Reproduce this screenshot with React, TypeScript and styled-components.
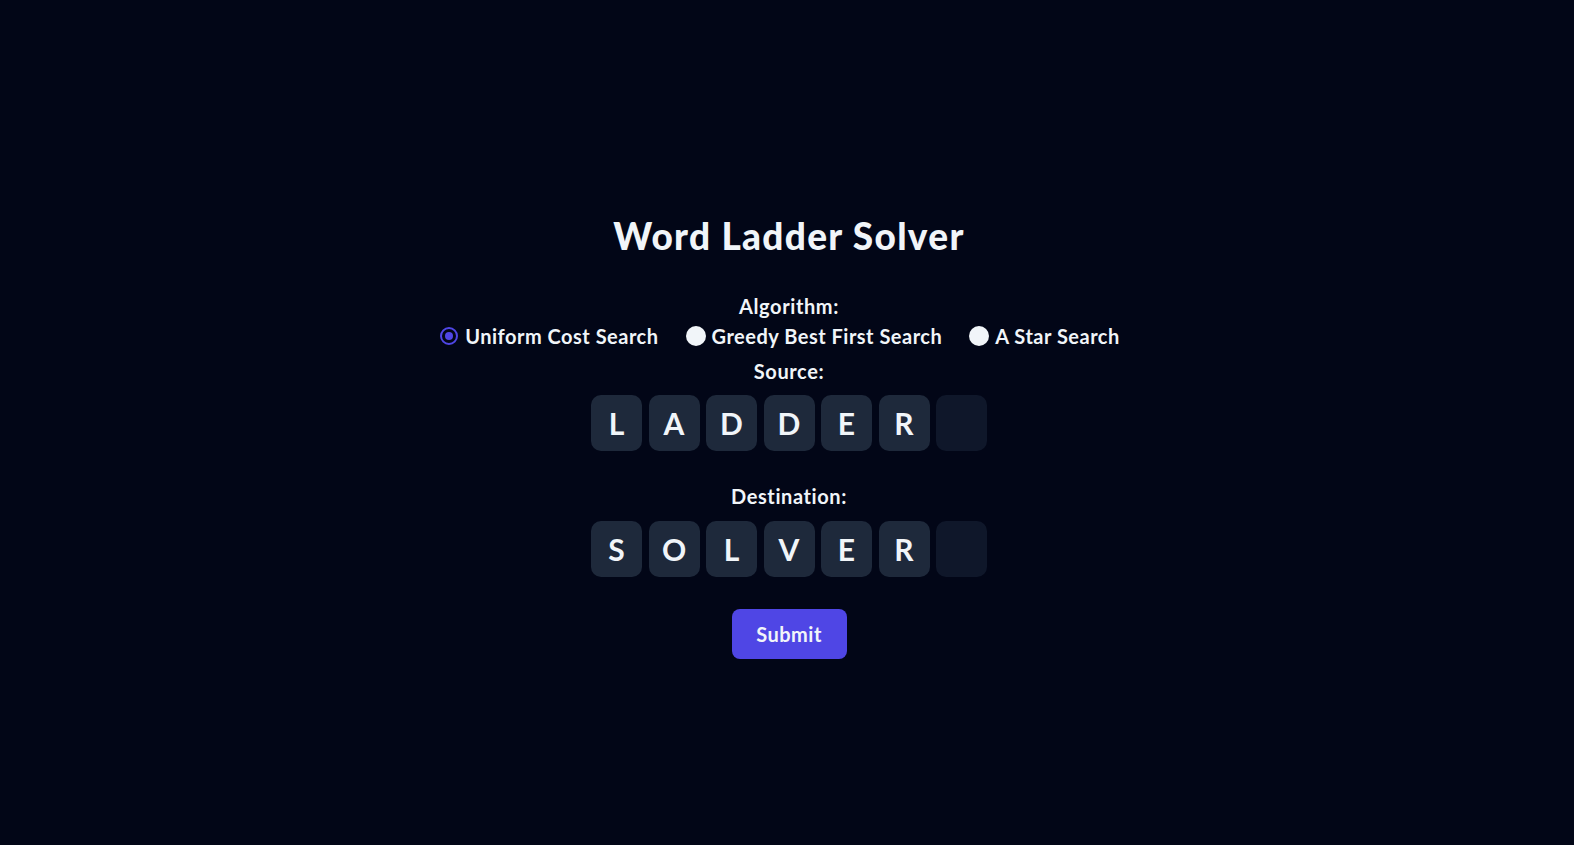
import React, { useState } from "react";
import styled, { createGlobalStyle } from "styled-components";

const GlobalStyle = createGlobalStyle`
  html, body {
    margin: 0;
    padding: 0;
    background: #020617;
  }
  body {
    font-family: "Lato", "Inter", sans-serif;
    color: #f1f5f9;
  }
`;

const Page = styled.main`
  min-height: 100vh;
  box-sizing: border-box;
  padding-top: 214px;
  padding-left: 4px;
  display: flex;
  flex-direction: column;
  align-items: center;
`;

const Title = styled.h1`
  margin: 0 0 36px;
  font-size: 37px;
  line-height: 44px;
  font-weight: 900;
  letter-spacing: 1.3px;
  color: #f1f5f9;
`;

const Label = styled.div<{ $gapBelow: number }>`
  font-size: 20px;
  line-height: 24px;
  font-weight: 700;
  letter-spacing: 0.6px;
  margin-bottom: ${(p) => p.$gapBelow}px;
`;

const RadioRow = styled.div`
  display: flex;
  align-items: center;
  gap: 8px;
  margin-bottom: 11px;
`;

const RadioItem = styled.label`
  display: flex;
  align-items: center;
  gap: 6px;
  margin-right: 19px;
  font-size: 20px;
  line-height: 24px;
  font-weight: 700;
  letter-spacing: 0.5px;
  cursor: pointer;
`;

const RadioDot = styled.span<{ $checked: boolean }>`
  box-sizing: border-box;
  flex: none;
  width: ${(p) => (p.$checked ? 18 : 20)}px;
  height: ${(p) => (p.$checked ? 18 : 20)}px;
  margin: ${(p) => (p.$checked ? "0 1px" : "0")};
  border-radius: 50%;
  background: ${(p) => (p.$checked ? "#020617" : "#f1f5f9")};
  border: ${(p) => (p.$checked ? "2.5px solid #4f46e5" : "none")};
  display: flex;
  align-items: center;
  justify-content: center;
  &::after {
    content: "";
    display: ${(p) => (p.$checked ? "block" : "none")};
    width: 8px;
    height: 8px;
    border-radius: 50%;
    background: #4f46e5;
  }
`;

const TileRow = styled.div<{ $gapBelow: number }>`
  display: flex;
  gap: 6.5px;
  margin-bottom: ${(p) => p.$gapBelow}px;
`;

const Tile = styled.div<{ $empty: boolean }>`
  width: 51px;
  height: 56px;
  border-radius: 10px;
  background: ${(p) => (p.$empty ? "#0f172a" : "#1e293b")};
  display: flex;
  align-items: center;
  justify-content: center;
  font-size: 30px;
  font-weight: 700;
  color: #f1f5f9;
`;

const SubmitButton = styled.button`
  width: 115px;
  height: 50px;
  border: none;
  border-radius: 8px;
  background: #4f46e5;
  color: #f1f5f9;
  font-family: "Lato", "Inter", sans-serif;
  font-size: 20px;
  font-weight: 700;
  letter-spacing: 0.5px;
  cursor: pointer;
`;

const algorithms = ["Uniform Cost Search", "Greedy Best First Search", "A Star Search"];

function Word({ word, gapBelow }: { word: string; gapBelow: number }) {
  const letters = Array.from({ length: 7 }, (_, i) => word[i] ?? "");
  return (
    <TileRow $gapBelow={gapBelow}>
      {letters.map((l, i) => (
        <Tile key={i} $empty={l === ""}>
          {l}
        </Tile>
      ))}
    </TileRow>
  );
}

export default function App() {
  const [algo, setAlgo] = useState(0);
  return (
    <>
      <GlobalStyle />
      <Page>
        <Title>Word Ladder Solver</Title>
        <Label $gapBelow={6}>Algorithm:</Label>
        <RadioRow>
          {algorithms.map((a, i) => (
            <RadioItem key={a} onClick={() => setAlgo(i)}>
              <RadioDot $checked={algo === i} />
              {a}
            </RadioItem>
          ))}
        </RadioRow>
        <Label $gapBelow={12}>Source:</Label>
        <Word word="LADDER" gapBelow={33} />
        <Label $gapBelow={13}>Destination:</Label>
        <Word word="SOLVER" gapBelow={32} />
        <SubmitButton>Submit</SubmitButton>
      </Page>
    </>
  );
}
